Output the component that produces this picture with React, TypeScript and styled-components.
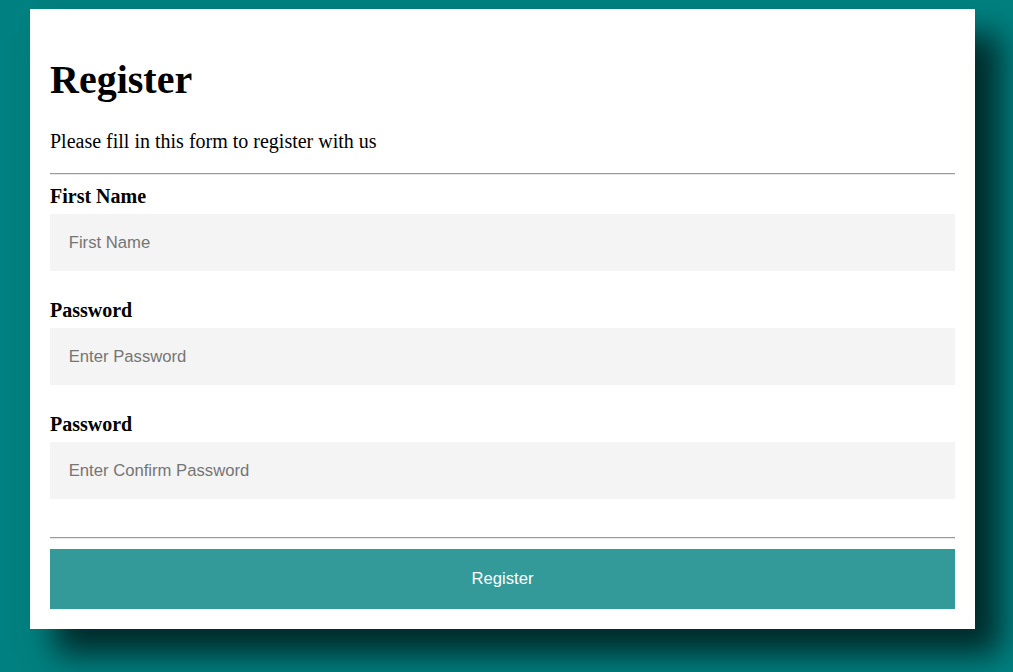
import { createGlobalStyle, styled } from 'styled-components';

const GlobalStyle = createGlobalStyle`
  html, body {
    margin: 0;
    padding: 0;
    background-color: #008080;
  }
  * {
    box-sizing: border-box;
  }
`;

type Field = {
  id: string;
  label: string;
  placeholder: string;
  type: string;
};

const fields: Field[] = [
  { id: 'firstName', label: 'First Name', placeholder: 'First Name', type: 'text' },
  { id: 'password', label: 'Password', placeholder: 'Enter Password', type: 'password' },
  { id: 'confirm', label: 'Password', placeholder: 'Enter Confirm Password', type: 'password' },
];

export default function App() {
  return (
    <>
      <GlobalStyle />
      <S.Page>
        <S.Card onSubmit={(e) => e.preventDefault()}>
          <S.Title>Register</S.Title>
          <S.Intro>Please fill in this form to register with us</S.Intro>
          <S.Rule />
          {fields.map((f) => (
            <div key={f.id}>
              <S.Label htmlFor={f.id}>{f.label}</S.Label>
              <S.Input id={f.id} type={f.type} placeholder={f.placeholder} />
            </div>
          ))}
          <S.Rule $top={38} />
          <S.Button type="submit">Register</S.Button>
        </S.Card>
      </S.Page>
    </>
  );
}

const S = {
  Page: styled.div`
    min-height: 100vh;
    padding: 9px 0 0 30px;
    overflow: hidden;
  `,
  Card: styled.form`
    width: 945px;
    padding: 20px;
    background-color: #ffffff;
    box-shadow: 25px 25px 30px rgba(0, 0, 0, 0.68);
    font-family: 'Liberation Serif', 'Times New Roman', serif;
    color: #000;
  `,
  Title: styled.h1`
    margin: 28px 0 0;
    font-size: 40px;
    line-height: 46px;
    font-weight: bold;
  `,
  Intro: styled.p`
    margin: 27px 0 20px;
    font-size: 20px;
    line-height: 23px;
  `,
  Rule: styled.hr<{ $top?: number }>`
    height: 0;
    margin: ${(p) => p.$top ?? 10}px 0 10px;
    border: none;
    border-top: 1px solid #9c9c9c;
    border-bottom: 1px solid #e6e6e6;
  `,
  Label: styled.label`
    display: block;
    font-size: 20px;
    line-height: 23px;
    font-weight: bold;
  `,
  Input: styled.input`
    display: block;
    width: 100%;
    height: 57px;
    margin: 6px 0 28px;
    padding: 0 18.75px;
    border: none;
    outline: none;
    background-color: #f4f4f4;
    font-family: 'Liberation Sans', Arial, sans-serif;
    font-size: 16.67px;
    color: #222;
    &::placeholder {
      color: #757575;
    }
  `,
  Button: styled.button`
    display: block;
    width: 100%;
    height: 60px;
    margin: 0;
    border: none;
    background-color: #339999;
    color: #ffffff;
    font-family: 'Liberation Sans', Arial, sans-serif;
    font-size: 16.67px;
    cursor: pointer;
  `,
};
